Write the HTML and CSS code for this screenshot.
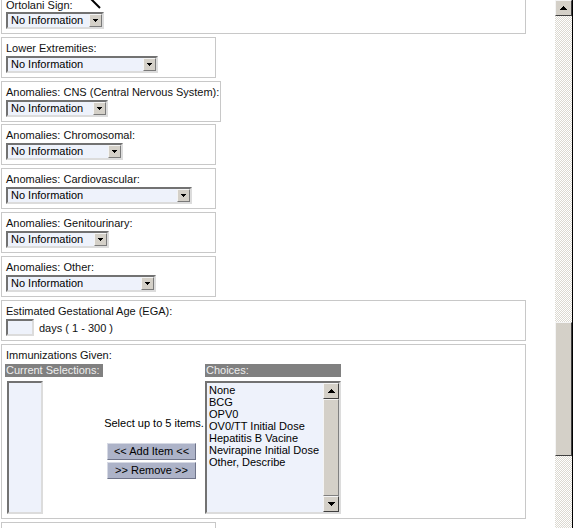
FILE: index.html
```html
<!DOCTYPE html>
<html>
<head>
<meta charset="utf-8">
<link rel="stylesheet" href="styles.css">
</head>
<body>
<div class="window">
  <div class="page">
    <div class="field wide first">
      <div class="label">Ortolani Sign:</div>
      <div class="select s-ortolani"><span class="val">No Information</span><span class="drop"><svg width="5" height="3" viewBox="0 0 5 3"><path d="M0 0h5v1h-5z M1 1h3v1h-3z M2 2h1v1h-1z"/></svg></span></div>
    </div>
    <div class="field">
      <div class="label">Lower Extremities:</div>
      <div class="select s-lower"><span class="val">No Information</span><span class="drop"><svg width="5" height="3" viewBox="0 0 5 3"><path d="M0 0h5v1h-5z M1 1h3v1h-3z M2 2h1v1h-1z"/></svg></span></div>
    </div>
    <div class="field cns">
      <div class="label">Anomalies: CNS (Central Nervous System):</div>
      <div class="select s-cns"><span class="val">No Information</span><span class="drop"><svg width="5" height="3" viewBox="0 0 5 3"><path d="M0 0h5v1h-5z M1 1h3v1h-3z M2 2h1v1h-1z"/></svg></span></div>
    </div>
    <div class="field">
      <div class="label">Anomalies: Chromosomal:</div>
      <div class="select s-chrom"><span class="val">No Information</span><span class="drop"><svg width="5" height="3" viewBox="0 0 5 3"><path d="M0 0h5v1h-5z M1 1h3v1h-3z M2 2h1v1h-1z"/></svg></span></div>
    </div>
    <div class="field">
      <div class="label">Anomalies: Cardiovascular:</div>
      <div class="select s-cardio"><span class="val">No Information</span><span class="drop"><svg width="5" height="3" viewBox="0 0 5 3"><path d="M0 0h5v1h-5z M1 1h3v1h-3z M2 2h1v1h-1z"/></svg></span></div>
    </div>
    <div class="field">
      <div class="label">Anomalies: Genitourinary:</div>
      <div class="select s-genito"><span class="val">No Information</span><span class="drop"><svg width="5" height="3" viewBox="0 0 5 3"><path d="M0 0h5v1h-5z M1 1h3v1h-3z M2 2h1v1h-1z"/></svg></span></div>
    </div>
    <div class="field">
      <div class="label">Anomalies: Other:</div>
      <div class="select s-other"><span class="val">No Information</span><span class="drop"><svg width="5" height="3" viewBox="0 0 5 3"><path d="M0 0h5v1h-5z M1 1h3v1h-3z M2 2h1v1h-1z"/></svg></span></div>
    </div>
    <div class="field wide">
      <div class="label">Estimated Gestational Age (EGA):</div>
      <div class="ega-row"><span class="textbox"></span><span class="unit">days ( 1 - 300 )</span></div>
    </div>
    <div class="field wide imm">
      <div class="label">Immunizations Given:</div>
      <div class="imm-grid">
        <div class="head">Current Selections:</div>
        <div class="head blank"></div>
        <div class="head">Choices:</div>
        <div class="cur-cell"><div class="listbox cur"></div></div>
        <div class="mid">
          <div class="hint">Select up to 5 items.</div>
          <div class="btn first">&lt;&lt; Add Item &lt;&lt;</div>
          <div class="btn">&gt;&gt; Remove &gt;&gt;</div>
        </div>
        <div class="listbox choices">
          <div class="items">
            <div>None</div>
            <div>BCG</div>
            <div>OPV0</div>
            <div>OV0/TT Initial Dose</div>
            <div>Hepatitis B Vacine</div>
            <div>Nevirapine Initial Dose</div>
            <div>Other, Describe</div>
          </div>
          <div class="lscroll">
            <div class="lbtn"><svg width="7" height="4" viewBox="0 0 7 4"><path d="M3 0h1v1h-1z M2 1h3v1h-3z M1 2h5v1h-5z M0 3h7v1h-7z"/></svg></div>
            <div class="lthumb"></div>
            <div class="lbtn"><svg width="7" height="4" viewBox="0 0 7 4"><path d="M0 0h7v1h-7z M1 1h5v1h-5z M2 2h3v1h-3z M3 3h1v1h-1z"/></svg></div>
          </div>
        </div>
      </div>
    </div>
    <div class="field"></div>
  </div>
  <div class="vscroll">
    <div class="sbtn"><svg width="7" height="4" viewBox="0 0 7 4"><path d="M3 0h1v1h-1z M2 1h3v1h-3z M1 2h5v1h-5z M0 3h7v1h-7z"/></svg></div>
    <div class="track-a"></div>
    <div class="thumb"></div>
    <div class="track-b"></div>
  </div>
  <div class="edge"></div>
  <div class="rest"></div>
</div>
<svg class="cursor" width="16" height="12" viewBox="0 0 16 12">
  <path d="M3 -1 L12 8" stroke="#fff" stroke-width="4" fill="none"/>
  <path d="M3 -1 L12 8" stroke="#000" stroke-width="2" fill="none"/>
</svg>
</body>
</html>
```
FILE: styles.css
```css
html, body {
  margin: 0;
  padding: 0;
  background: #fff;
  overflow: hidden;
}
body {
  font-family: "Liberation Sans", Arial, sans-serif;
  font-size: 11px;
  color: #111;
  position: relative;
}
.window {
  display: flex;
  height: 528px;
  overflow: hidden;
}
.page {
  width: 554px;
  padding-left: 1px;
  margin-top: -6px;
  flex: none;
}
.field {
  box-sizing: border-box;
  width: 215px;
  height: 41px;
  border: 1px solid #c8c8c8;
  padding: 0 4px;
  margin-bottom: 3px;
}
.field.first { height: 40px; }
.field.first .label { padding-top: 4px; height: 17px; line-height: 13px; }
.field.cns { width: 220px; margin-bottom: 2px; }
.field.wide { width: 525px; }
.label {
  box-sizing: border-box;
  height: 18px;
  padding-top: 2px;
  line-height: 16px;
  white-space: nowrap;
}
.select {
  box-sizing: border-box;
  height: 17px;
  display: flex;
  align-items: center;
  border: 2px solid;
  border-color: #727272 #dcdcdc #dcdcdc #727272;
  background: #eef2fb;
  color: #000;
}
.s-ortolani { width: 98px; }
.s-lower { width: 152px; }
.s-cns { width: 102px; }
.s-chrom { width: 117px; }
.s-cardio { width: 186px; }
.s-genito { width: 103px; }
.s-other { width: 150px; }
.val {
  flex: 1;
  padding-left: 3px;
  line-height: 13px;
  white-space: nowrap;
  overflow: hidden;
}
.drop {
  box-sizing: border-box;
  width: 13px;
  height: 13px;
  flex: none;
  background: #d4d0c8;
  border: 1px solid;
  border-color: #f4f4f4 #7a7a7a #7a7a7a #f4f4f4;
  display: flex;
  align-items: center;
  justify-content: center;
}
.drop svg, .lbtn svg, .sbtn svg { display: block; shape-rendering: crispEdges; }
.ega-row {
  display: flex;
  align-items: center;
  height: 17px;
}
.textbox {
  box-sizing: border-box;
  width: 28px;
  height: 17px;
  border: 2px solid;
  border-color: #727272 #dcdcdc #dcdcdc #727272;
  background: #eef2fb;
}
.unit { margin-left: 5px; }
.field.imm { height: 175px; }
.imm-grid {
  display: grid;
  grid-template-columns: 98px 102px 136px;
  grid-template-rows: 13px 133px;
  row-gap: 4px;
  margin-top: 1px;
  margin-left: -1px;
}
.head {
  background: #808080;
  color: #eeeeee;
  line-height: 13px;
  padding-left: 1px;
  white-space: nowrap;
}
.head.blank { background: transparent; }
.cur-cell { display: flex; }
.listbox {
  box-sizing: border-box;
  border: 2px solid;
  border-color: #727272 #dcdcdc #dcdcdc #727272;
  background: #eef2fb;
}
.listbox.cur {
  width: 36px;
  height: 133px;
  margin-left: 2px;
}
.mid {
  display: flex;
  flex-direction: column;
  align-items: center;
  justify-content: center;
}
.hint {
  line-height: 13px;
  white-space: nowrap;
  color: #000;
}
.btn {
  box-sizing: border-box;
  width: 89px;
  height: 17px;
  line-height: 15px;
  text-align: center;
  background: #adb3c8;
  border: 1px solid;
  border-color: #d6d9e4 #6f7489 #6f7489 #d6d9e4;
  color: #000;
  margin-top: 2px;
  margin-left: -5px;
}
.btn.first { margin-top: 13px; }
.listbox.choices {
  display: flex;
  height: 133px;
}
.items {
  flex: 1;
  padding: 1px 2px;
  line-height: 12px;
  color: #000;
  white-space: nowrap;
  overflow: hidden;
}
.lscroll {
  width: 16px;
  flex: none;
  display: flex;
  flex-direction: column;
}
.lbtn, .sbtn {
  box-sizing: border-box;
  height: 16px;
  background: #d4d0c8;
  border: 1px solid;
  border-color: #f4f4f4 #404040 #404040 #f4f4f4;
  display: flex;
  align-items: center;
  justify-content: center;
  flex: none;
}
.lthumb {
  flex: 1;
  box-sizing: border-box;
  background: #d4d0c8;
  border: 1px solid;
  border-color: #f4f4f4 #808080 #808080 #f4f4f4;
}
.vscroll {
  width: 17px;
  flex: none;
  display: flex;
  flex-direction: column;
}
.track-a, .track-b {
  background-color: #fff;
  background-image: conic-gradient(#fff 25%, #dcd9d1 0 50%, #fff 0 75%, #dcd9d1 0);
  background-size: 2px 2px;
}
.track-a { height: 306px; flex: none; }
.track-b { flex: 1; }
.thumb {
  box-sizing: border-box;
  height: 134px;
  flex: none;
  background: #d4d0c8;
  border: 1px solid;
  border-color: #f4f4f4 #404040 #404040 #f4f4f4;
}
.edge { width: 1px; background: #000; flex: none; }
.rest { flex: 1; background: #fff; }
.cursor {
  position: absolute;
  left: 88px;
  top: 0;
}
```
